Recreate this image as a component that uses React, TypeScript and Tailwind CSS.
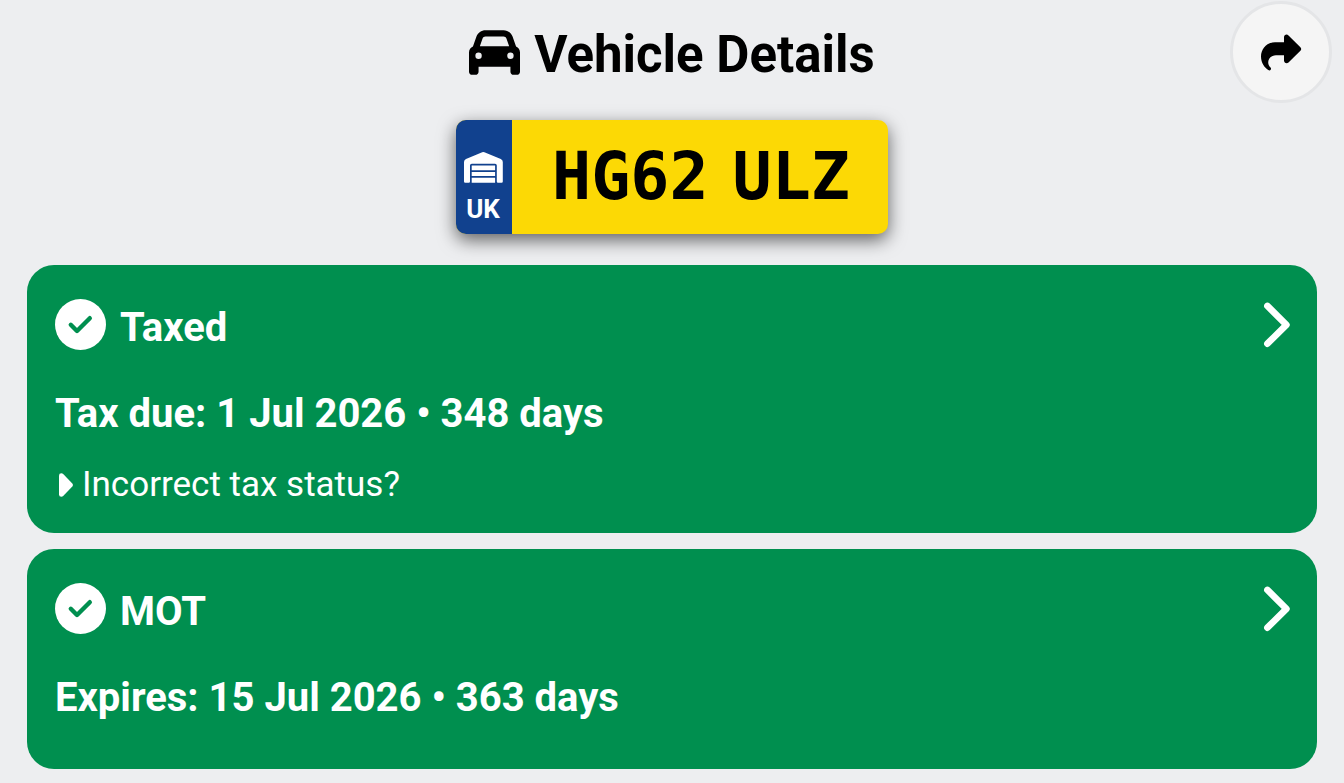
import { FaCar } from "react-icons/fa6";

function CheckBadge() {
  return (
    <svg viewBox="0 0 51 51" className="size-[51px] shrink-0" aria-hidden="true">
      <circle cx="25.5" cy="25.5" r="25.5" fill="#fff" />
      <path d="M15.8 25.8L22 32L34.8 19.2" fill="none" stroke="#008f4f" strokeWidth="4.4" strokeLinecap="round" strokeLinejoin="round" />
    </svg>
  );
}

function Chevron() {
  return (
    <svg viewBox="0 0 26 46" className="h-[46px] w-[26px] shrink-0 overflow-visible" aria-hidden="true">
      <path d="M4.4 3.9L23.4 22.8L4.4 41.7" fill="none" stroke="#fff" strokeWidth="6.6" strokeLinecap="round" strokeLinejoin="round" />
    </svg>
  );
}

function Garage() {
  return (
    <svg viewBox="0 0 39 31" className="h-[31px] w-[39px]" fill="#fff" aria-hidden="true">
      <path d="M18.2.3Q19.3-.2 20.4.3L36.8 7Q38.8 8 38.8 10V29.6Q38.8 30.8 37.6 30.8H34Q32.8 30.8 32.8 29.6V13.6Q32.8 11.8 31 11.8H7.8Q6 11.8 6 13.6V29.6Q6 30.8 4.8 30.8H1.2Q0 30.8 0 29.6V10Q0 8 2 7Z" />
      <path d="M7.7 13.4H31.1V18.3H7.7ZM7.7 20.1H31.1V24H7.7ZM7.7 25.8H31.1V30.8H7.7Z" />
    </svg>
  );
}

function ShareArrow() {
  return (
    <svg viewBox="-1 0 42 37" className="h-[37px] w-[42px]" aria-hidden="true">
      <path d="M23 8.3V3.2C23 .8 25.8-.2 27.5 1.4L39.4 13.2Q41 15 39.4 16.8L27.5 28.4C25.8 30 23 29 23 26.6V21.3H15C10.5 21.3 7.2 24.4 7.2 28.2C7.2 30.7 8.3 32.2 9.3 33.2C11 34.8 9.7 37.2 7.3 36.1C3.6 33.8 0 29 0 22.6C0 14.8 6 8.3 14 8.3Z" />
    </svg>
  );
}

function StatusCard({ title, detail, note }: { title: string; detail: string; note?: string }) {
  return (
    <section className="rounded-[27px] bg-[#008f4f] px-7 pt-[34px] pb-7 text-white">
      <button type="button" className="flex w-full items-center justify-between text-left">
        <span className="flex items-center gap-3.5">
          <CheckBadge />
          <span className="pt-1.5 text-[40px] leading-[45px] font-bold">{title}</span>
        </span>
        <Chevron />
      </button>
      <p className="mt-[38px] text-[40px] leading-[52px] font-bold">{detail}</p>
      {note ? (
        <a href="#tax-status" className="mt-6 flex items-center gap-2 text-[35px] leading-[41px]">
          <svg viewBox="0 0 19 24" className="h-6 w-[19px]" fill="#fff" aria-hidden="true">
            <path d="M4 2.6Q4 .2 6.4.2Q7.4.2 8.2 1L17.3 10.4Q18.8 12 17.3 13.6L8.2 23Q7.4 23.8 6.4 23.8Q4 23.8 4 21.4Z" />
          </svg>
          {note}
        </a>
      ) : (
        <div className="h-[17px]" />
      )}
    </section>
  );
}

export default function App() {
  return (
    <div className="min-h-screen bg-[#edeef0] pb-3.5 font-['Roboto',sans-serif] text-black">
      <header className="grid grid-cols-[1fr_auto_1fr] items-center px-3 pt-px">
        <h1 className="col-start-2 flex items-center gap-3.5 text-[51px] leading-[60px] font-bold">
          <FaCar className="size-[51px]" aria-hidden="true" />
          <span className="pt-1.5">Vehicle Details</span>
        </h1>
        <button type="button" aria-label="Share" className="flex size-[102px] items-center justify-center justify-self-end rounded-full border-[3px] border-[#e4e5e7] bg-[#f5f5f5]">
          <ShareArrow />
        </button>
      </header>
      <main>
        <div className="mx-auto mt-[17px] flex h-[114px] w-[432px] overflow-hidden rounded-[10px] bg-[#fcd905] shadow-[0_6px_18px_rgba(0,0,0,0.6)]">
          <div className="flex w-14 flex-col items-center bg-[#11418e] pt-8 pr-0.5 text-white">
            <Garage />
            <span className="mt-2.5 text-[26px] leading-8 font-bold">UK</span>
          </div>
          <div className="flex flex-1 items-center justify-center gap-6 pl-0.5 font-['DejaVu_Sans_Mono',monospace] text-[65px] leading-[80px] font-bold">
            <span>HG62</span>
            <span>ULZ</span>
          </div>
        </div>
        <div className="mt-[31px] flex flex-col gap-4 px-[27px]">
          <StatusCard title="Taxed" detail="Tax due: 1 Jul 2026 • 348 days" note="Incorrect tax status?" />
          <StatusCard title="MOT" detail="Expires: 15 Jul 2026 • 363 days" />
        </div>
      </main>
    </div>
  );
}
